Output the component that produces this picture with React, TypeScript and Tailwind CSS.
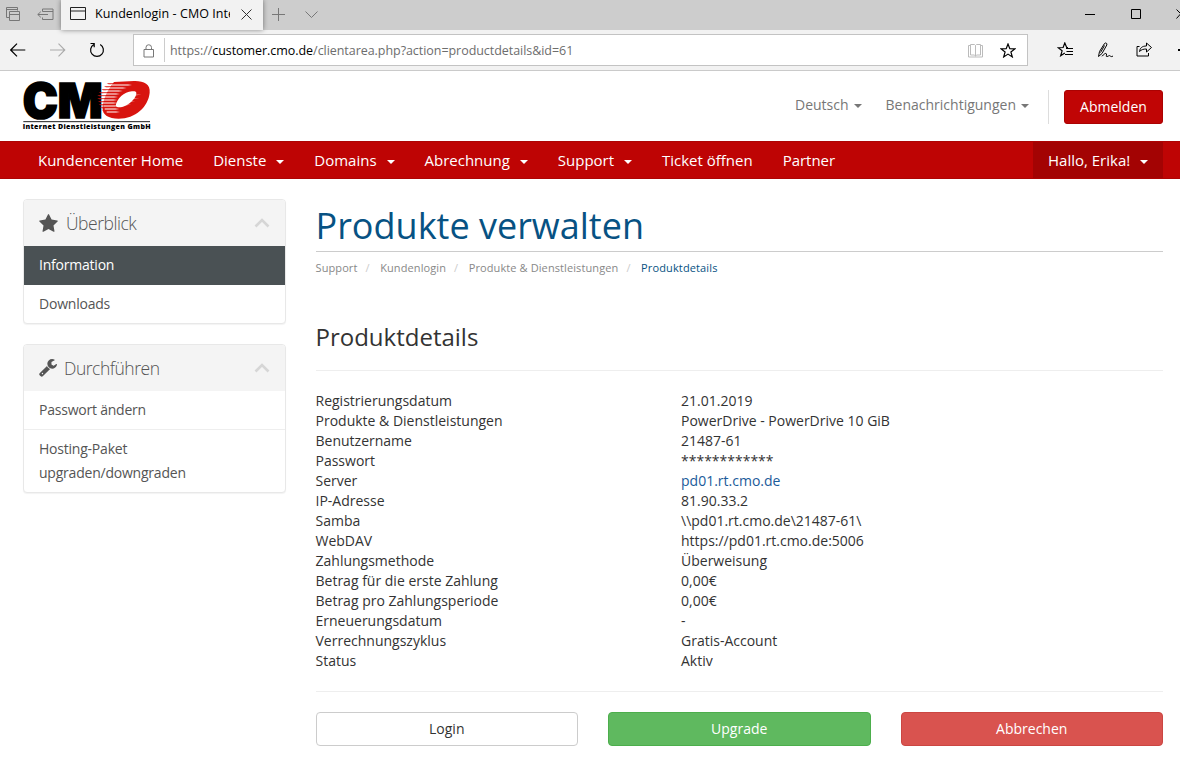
import React from "react";

const os = "font-['Open_Sans','Noto_Sans',sans-serif]";

function Caret({ className = "" }: { className?: string }) {
  return (
    <span
      className={`inline-block h-0 w-0 border-x-4 border-t-4 border-x-transparent border-t-current align-middle ${className}`}
    />
  );
}

type IconProps = { w: number; h: number; className?: string; children: React.ReactNode };

function Icon({ w, h, className = "", children }: IconProps) {
  return (
    <svg
      width={w}
      height={h}
      viewBox={`0 0 ${w} ${h}`}
      fill="none"
      stroke="currentColor"
      strokeWidth="1"
      className={`block shrink-0 ${className}`}
    >
      {children}
    </svg>
  );
}

function TabBar() {
  return (
    <div className="flex h-[30px] bg-[#cdcdcd] text-[#777]">
      <Icon w={15} h={15} className="mt-[7px] ml-[6px]">
        <path d="M3.5 10.5h-3v-10h11v3M.5 2.5h11M3.5 4.5h10v9h-10zM3.5 7.5h10" />
      </Icon>
      <Icon w={17} h={13} className="mt-[8px] ml-[16px]">
        <path d="M5.500 3.500v-2.500h10.500v10.500h-10.500v-2M5.500 3.500h10.500M.8 6.500h10.200M3.800 3.700l-3 2.800 3 2.800" />
      </Icon>
      <div className="ml-[7px] flex w-[202px] bg-[#f2f2f2] shadow-[0_0_5px_rgba(0,0,0,0.45)]">
        <Icon w={17} h={14} className="mt-[7px] ml-[9px] text-[#222]">
          <path d="M.5 .5h15v12h-15zM.5 4h15" />
        </Icon>
        <div className="mt-[4px] ml-[8px] w-[135px] overflow-hidden text-[12.5px] leading-[20px] whitespace-nowrap text-black">
          <span className="tracking-[0.06px]">Kundenlogin - CMO Inte</span>
        </div>
        <Icon w={11} h={11} className="mt-[9px] ml-[11px] text-[#333]">
          <path d="M.5 .5l10 10M10.500 .5l-10 10" />
        </Icon>
      </div>
      <Icon w={14} h={14} className="mt-[8px] ml-[9px]">
        <path d="M6.500 0v13M0 6.500h13" />
      </Icon>
      <Icon w={13} h={8} className="mt-[11px] ml-[19px]">
        <path d="M.5 .5l6 6 6-6" />
      </Icon>
      <div className="flex-1" />
      <Icon w={10} h={2} className="mt-[14px] mr-[36px] text-black">
        <path d="M0 .5h10" />
      </Icon>
      <Icon w={10} h={10} className="mt-[9px] mr-[35px] text-black">
        <path d="M.5 .5h9v9h-9z" />
      </Icon>
      <Icon w={4} h={10} className="mt-[9px] text-black">
        <path d="M.5 .5l4 4M4.500 5l-4 4.500" />
      </Icon>
    </div>
  );
}

function AddressBar() {
  return (
    <div className="flex h-[41px] border-b border-[#cacaca] bg-[#f2f2f2] text-black">
      <Icon w={16} h={14} className="mt-[13px] ml-[10px]">
        <path d="M.8 7h14.500M7 .7L.7 7 7 13.300" strokeWidth="1.2" />
      </Icon>
      <Icon w={16} h={14} className="mt-[13px] ml-[24px] text-[#aaa]">
        <path d="M0 7h14.500M8.500 .7L14.800 7 8.500 13.300" strokeWidth="1.1" />
      </Icon>
      <Icon w={16} h={16} className="mt-[12px] ml-[23px]">
        <path d="M11.200 2.500a6.400 6.400 0 1 1-6.400 0M1.500 1.500h3.700v3.700" strokeWidth="1.2" />
      </Icon>
      <div className="mt-[4px] ml-[28px] flex h-[32px] w-[896px] border border-[#c3c3c3] bg-white">
        <Icon w={12} h={14} className="mt-[9px] ml-[9px] text-[#777]">
          <path d="M1 5.500h9.500v7.500h-9.500zM3 5.500v-2a2.750 2.750 0 0 1 5.500 0v2" />
        </Icon>
        <div className="mt-[3px] ml-[9px] h-[24px] w-px bg-[#ccc]" />
        <div className="mt-[6px] ml-[5px] w-[800px] text-[12.5px] leading-[20px] whitespace-nowrap text-[#6d6d6d]">
          <span className="tracking-[-0.05px]">
            https://<span className="text-black">customer.cmo.de</span>
            /clientarea.php?action=productdetails&amp;id=61
          </span>
        </div>
        <Icon w={15} h={14} className="mt-[9px] ml-[1px] -translate-x-[3px] text-[#bbb]">
          <path d="M2.500 1.500h-2v11.500h14v-11.500h-2M2.500 .5h4l1 1 1-1h4v10.500h-4l-1 1-1-1h-4zM7.500 1.500v11" />
        </Icon>
        <Icon w={16} h={15} className="mt-[8px] ml-[14px]">
          <path d="M8 1l1.800 4.700 5 .2-3.900 3.100 1.400 4.900L8 11.100l-4.300 2.800 1.400-4.900L1.200 5.900l5-.2z" strokeWidth="1.2" />
        </Icon>
      </div>
      <Icon w={17} h={15} className="mt-[12px] ml-[29px]">
        <path d="M11 5.500h-1.300L7.800 1 6.100 5.500l-4.900.2 3.900 3.100-1.400 4.900 4.100-2.800M9 6.500h7M9.500 9.500h6.500M8 12.500h8" strokeWidth="1.2" />
      </Icon>
      <Icon w={17} h={17} className="mt-[12px] ml-[23px]">
        <path d="M1.500 14.500L2.500 9.500 7.500 1.500C8.500 .3 10.500 1.300 9.800 3L5 11.500zM3.500 10.500L7.500 3.500M5 14.300C7 12 9 10.500 9.500 12c.3 1.500-1 2.500.5 2.500s2-1.500 3-.7 1.500 1.200 3 .2" />
      </Icon>
      <Icon w={17} h={15} className="mt-[12px] ml-[22px]">
        <path d="M3.500 4.500h-2.500v9.500h11.500v-3M3.500 9.500C4 6 6 4 10.500 4V1l5 4.500-5 4.500V7C7.500 7 5.500 7.500 3.500 9.500z" />
      </Icon>
      <div className="mt-[19px] ml-[25px] h-[2px] w-[2px] bg-black" />
    </div>
  );
}

/* Speed lines cut into the left side of the ring: x, y, length. */
const CUTS = [
  [292, 45, 74], [284, 54, 66], [276, 63, 62], [268, 72, 62], [264, 81, 60],
  [264, 90, 58], [266, 99, 56], [268, 108, 58], [272, 117, 56], [278, 126, 52],
];

function Logo() {
  return (
    <svg width="160" height="70" viewBox="0 0 480 210" className="block">
      <text
        x="38"
        y="143"
        textLength="240"
        lengthAdjust="spacingAndGlyphs"
        fontFamily="Inter, 'Liberation Sans', sans-serif"
        fontWeight="900"
        fontSize="146"
        fill="#000"
        stroke="#000"
        strokeWidth="5"
      >
        CM
      </text>
      <path
        fillRule="evenodd"
        fill="#d8140f"
        d="M312 36L372 33C400 32 422 42 419 68C415 110 376 146 326 146C296 146 276 136 278 112C279 88 292 60 312 36ZM366 64C342 66 320 86 317 108C322 114 334 113 346 107C366 97 380 80 379 68C377 63 372 63 366 64Z"
      />
      {CUTS.map(([x, y, w]) => (
        <React.Fragment key={y}>
          <path d={`M${x - 2} ${y - 5}h30v3h-24z`} fill="#d8140f" />
          <path d={`M${x + 12} ${y - 1.500}h${w - 24}l12 1.500-12 1.500h-${w - 24}z`} fill="#fff" />
        </React.Fragment>
      ))}
      <path d="M360 74h34l-34 3zM350 84h38l-38 3zM340 94h36l-36 3zM330 104h34l-34 3z" fill="#fff" />
      <path d="M40 155H420" stroke="#222" strokeWidth="3" />
      <text
        x="38"
        y="176"
        textLength="384"
        lengthAdjust="spacing"
        fontFamily="'Open Sans', 'Liberation Sans', sans-serif"
        fontWeight="800"
        fontSize="21"
        fill="#000"
      >
        Internet Dienstleistungen GmbH
      </text>
    </svg>
  );
}

function Header() {
  return (
    <header className="flex h-[70px] pr-[17px] text-[14px] leading-[20px] text-[#777]">
      <div className="-mt-px ml-[10px] flex-1">
        <Logo />
      </div>
      <div className="mt-[24px] mr-[24px] whitespace-nowrap">
        Deutsch<Caret className="ml-[5px]" />
      </div>
      <div className="mt-[24px] mr-[19px] whitespace-nowrap">
        Benachrichtigungen<Caret className="ml-[5px]" />
      </div>
      <div className="mt-[19px] h-[34px] w-px bg-[#ddd]" />
      <button className="mt-[19px] ml-[15px] h-[34px] w-[99px] rounded-[3px] border border-[#ab0202] bg-[#c00505] text-white">
        Abmelden
      </button>
    </header>
  );
}

const NAV: [string, boolean][] = [
  ["Kundencenter Home", false],
  ["Dienste", true],
  ["Domains", true],
  ["Abrechnung", true],
  ["Support", true],
  ["Ticket öffnen", false],
  ["Partner", false],
];

function Nav() {
  return (
    <nav className="flex h-[38px] border-y border-[#ad0404] bg-[#be0404] pr-[17px] pl-[23px] text-[15px] leading-[36px] text-white">
      {NAV.map(([label, menu]) => (
        <div key={label} className="px-[15px] tracking-[-0.01px] whitespace-nowrap">
          {label}
          {menu && <Caret className="ml-[10px]" />}
        </div>
      ))}
      <div className="flex-1" />
      <div className="w-[130px] bg-[#a30303] pl-[15px] whitespace-nowrap">
        Hallo, Erika!
        <Caret className="ml-[10px]" />
      </div>
    </nav>
  );
}

function Chevron() {
  return (
    <svg width="16" height="10" viewBox="0 0 16 10" className="block">
      <path d="M1.500 8.500L8 2l6.500 6.500" fill="none" stroke="#d6d6d6" strokeWidth="2.6" />
    </svg>
  );
}

function Panel({ icon, title, children }: { icon: React.ReactNode; title: string; children: React.ReactNode }) {
  return (
    <section className="overflow-hidden rounded-[4px] border border-[#e8e8e8] bg-white text-[14px] leading-[24px] tracking-[-0.22px] text-[#555] shadow-[0_1px_1px_rgba(0,0,0,0.05)]">
      <div className="flex h-[46px] items-center bg-[#f4f4f4] pr-[15px] pl-[15px]">
        {icon}
        <span className="flex-1 text-[17.5px] font-light tracking-[-0.48px]">{title}</span>
        <Chevron />
      </div>
      {children}
    </section>
  );
}

function Sidebar() {
  return (
    <aside className="flex w-[263px] flex-col gap-[20px]">
      <Panel
        title="Überblick"
        icon={
          <svg width="19" height="18" viewBox="0 0 1664 1600" className="mr-[8px]" fill="#555">
            <path d="M1664 615q0 22-26 48l-363 354 86 500q1 7 1 20 0 21-10.500 35.500T1321 1587q-19 0-40-12l-449-236-449 236q-22 12-40 12-21 0-31.500-14.500T301 1537q0-6 2-20l86-500L25 663Q0 636 0 615q0-37 56-46l502-73L783 41q19-41 49-41t49 41l225 455 502 73q56 9 56 46z" />
          </svg>
        }
      >
        <div className="h-[39px] bg-[#4a5154] px-[15px] py-[7px] text-white">Information</div>
        <div className="h-[38px] px-[15px] py-[7px]">Downloads</div>
      </Panel>
      <Panel
        title="Durchführen"
        icon={
          <svg width="18" height="18" viewBox="0 0 1664 1664" className="mr-[7px]" fill="#555">
            <path d="M384 1344q0-26-19-45t-45-19-45 19-19 45 19 45 45 19 45-19 19-45zm644-420l-682 682q-37 37-90 37-52 0-91-37L59 1498q-38-36-38-90 0-53 38-91l681-681q39 98 114.500 173.500T1028 924zm634-435q0 39-23 106-47 134-164.500 217.500T1216 896q-185 0-316.500-131.500T768 448t131.500-316.500T1216 0q58 0 121.500 16.500T1445 63q16 11 16 28t-16 28l-293 169v224l193 107q5-3 79-48.500t135.500-81T1630 454q15 0 23.500 10t8.500 25z" />
          </svg>
        }
      >
        <div className="h-[39px] border-b border-[#eee] px-[15px] py-[7px]">Passwort ändern</div>
        <div className="px-[15px] py-[7px]">
          Hosting-Paket
          <br />
          upgraden/downgraden
        </div>
      </Panel>
    </aside>
  );
}

const DETAILS = [
  ["Registrierungsdatum", "21.01.2019"],
  ["Produkte & Dienstleistungen", "PowerDrive - PowerDrive 10 GiB"],
  ["Benutzername", "21487-61"],
  ["Passwort", "************"],
  ["Server", "pd01.rt.cmo.de"],
  ["IP-Adresse", "81.90.33.2"],
  ["Samba", "\\\\pd01.rt.cmo.de\\21487-61\\"],
  ["WebDAV", "https://pd01.rt.cmo.de:5006"],
  ["Zahlungsmethode", "Überweisung"],
  ["Betrag für die erste Zahlung", "0,00€"],
  ["Betrag pro Zahlungsperiode", "0,00€"],
  ["Erneuerungsdatum", "-"],
  ["Verrechnungszyklus", "Gratis-Account"],
  ["Status", "Aktiv"],
];

function Breadcrumb() {
  return (
    <div className="flex h-[32px] items-center text-[11px] tracking-[0.1px] text-[#888]">
      {["Support", "Kundenlogin", "Produkte & Dienstleistungen"].map((c) => (
        <React.Fragment key={c}>
          <span>{c}</span>
          <span className="w-[22.700px] pl-[8px] text-[#ccc]">/</span>
        </React.Fragment>
      ))}
      <span className="tracking-[0.13px] text-[#075283]">Produktdetails</span>
    </div>
  );
}

function Main() {
  return (
    <main className="w-[847.5px] text-[14px] leading-[20px] text-[#333]">
      <h1 className="h-[53px] border-b border-[#ccc] pt-[7px] text-[36px] leading-[40px] text-[#075283]">
        Produkte verwalten
      </h1>
      <Breadcrumb />
      <h2 className="mt-[38px] text-[24px] leading-[30px]">Produktdetails</h2>
      <hr className="mt-[18px] border-[#eee]" />
      <dl className="mt-[20px]">
        {DETAILS.map(([k, v]) => (
          <div key={k} className="flex">
            <dt className="w-[365.5px]">{k}</dt>
            <dd className={k === "Server" ? "text-[#1b5b9a]" : ""}>{v}</dd>
          </div>
        ))}
      </dl>
      <hr className="mt-[20px] border-[#eee]" />
      <div className="mt-[20px] grid grid-cols-3 gap-[30px]">
        <button className="h-[34px] rounded-[4px] border border-[#ccc] bg-white">Login</button>
        <button className="h-[34px] rounded-[4px] border border-[#4cae4c] bg-[#5fb95f] text-white">Upgrade</button>
        <button className="h-[34px] rounded-[4px] border border-[#cb4642] bg-[#d9534f] text-white">Abbrechen</button>
      </div>
    </main>
  );
}

export default function App() {
  return (
    <div className={`h-[766px] w-[1180px] overflow-hidden bg-white ${os}`}>
      <TabBar />
      <AddressBar />
      <Header />
      <Nav />
      <div className="flex gap-[29.5px] pt-[20px] pl-[23px]">
        <Sidebar />
        <Main />
      </div>
    </div>
  );
}
